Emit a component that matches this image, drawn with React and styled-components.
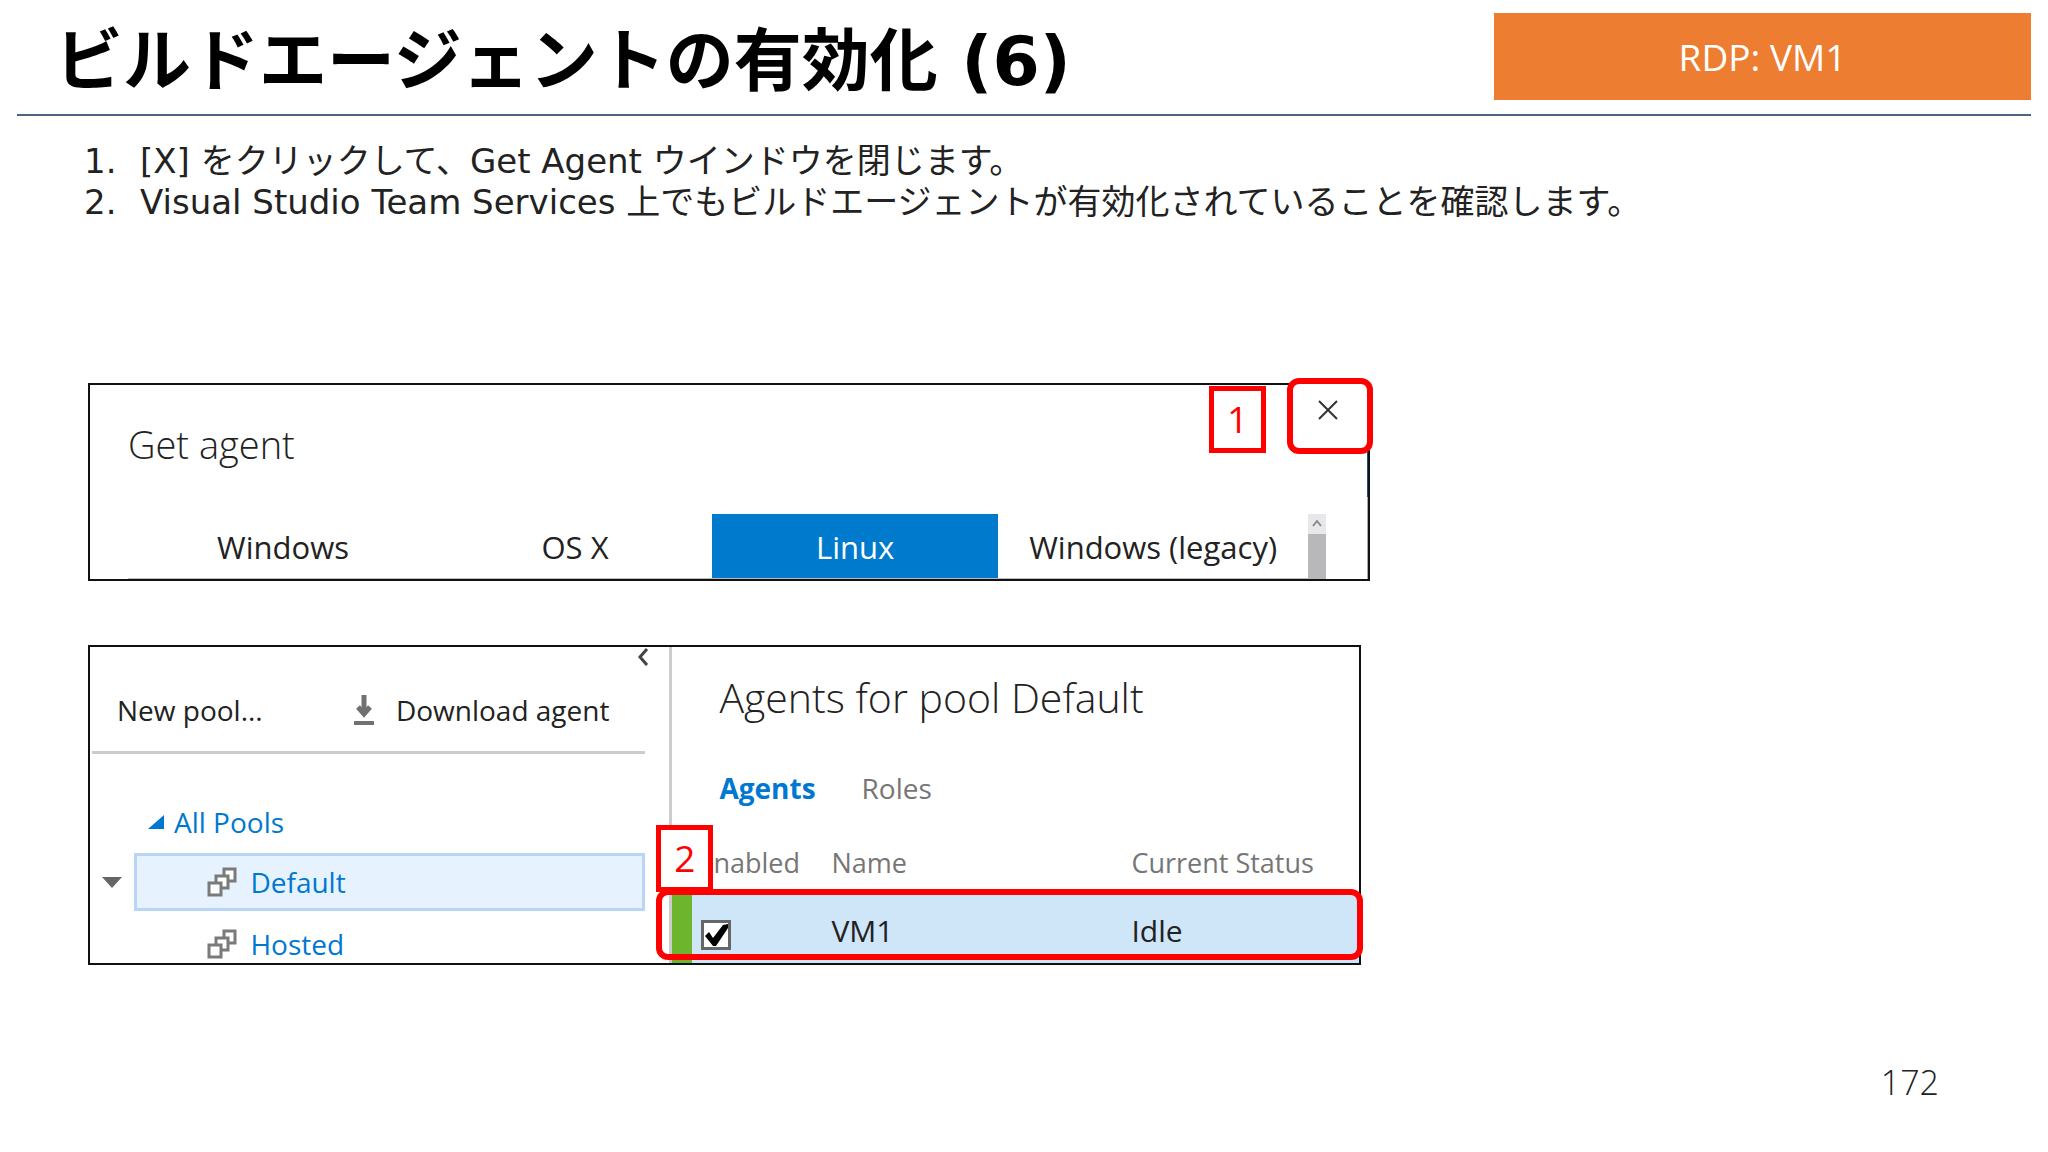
import React, { useState } from 'react';
import styled, { createGlobalStyle } from 'styled-components';

const uiFont = `'Open Sans', 'Noto Sans', 'Noto Sans CJK JP', sans-serif`;
const slideFont = `'DejaVu Sans', 'Noto Sans CJK JP', sans-serif`;

const platforms = ['Windows', 'OS X', 'Linux', 'Windows (legacy)'];
const pools = ['Default', 'Hosted'];
const agents = [{ name: 'VM1', status: 'Idle', enabled: true }];

export default function App() {
  return (
    <Slide>
      <GlobalStyle />
      <Header>
        <Title>ビルドエージェントの有効化 (6)</Title>
        <Machine>RDP: VM1</Machine>
      </Header>
      <Content>
        <Steps>
          <li>[X] をクリックして、Get Agent ウインドウを閉じます。</li>
          <li>Visual Studio Team Services 上でもビルドエージェントが有効化されていることを確認します。</li>
        </Steps>
        <GetAgent />
        <PoolManager />
      </Content>
      <PageNumber>172</PageNumber>
    </Slide>
  );
}

function GetAgent() {
  const [platform, setPlatform] = useState('Linux');

  return (
    <DialogFrame>
      <DialogTitle>Get agent</DialogTitle>
      <PlatformBar>
        {platforms.map((name) => (
          <Platform key={name} $active={name === platform} onClick={() => setPlatform(name)}>
            {name}
          </Platform>
        ))}
        <ScrollTrack>
          <svg width="18" height="20" viewBox="0 0 18 20" fill="none" stroke="#8a8a8a" strokeWidth="2">
            <path d="M5 12l4-5 4 5" />
          </svg>
          <ScrollThumb />
        </ScrollTrack>
      </PlatformBar>
      <StepBadge $top="1px" $right="102px">1</StepBadge>
      <CloseButton aria-label="Close">
        <svg width="20" height="20" viewBox="0 0 20 20" fill="none" stroke="#333" strokeWidth="2">
          <path d="M1 1l18 18M19 1L1 19" />
        </svg>
      </CloseButton>
    </DialogFrame>
  );
}

function PoolManager() {
  return (
    <PoolFrame>
      <Sidebar>
        <Collapse aria-label="Collapse">
          <svg width="12" height="18" viewBox="0 0 12 18" fill="none" stroke="#444" strokeWidth="3">
            <path d="M10 1L3 9l7 8" />
          </svg>
        </Collapse>
        <Toolbar>
          <ToolButton>New pool...</ToolButton>
          <ToolButton>
            <DownloadIcon />
            Download agent
          </ToolButton>
        </Toolbar>
        <AllPools href="#pools">
          <svg width="16" height="14" viewBox="0 0 16 14" fill="#0078d0">
            <path d="M16 0v14H0z" />
          </svg>
          All Pools
        </AllPools>
        {pools.map((name, i) => (
          <PoolRow key={name}>
            {i === 0 && (
              <svg width="20" height="11" viewBox="0 0 20 11" fill="#666">
                <path d="M0 0h20L10 11z" />
              </svg>
            )}
            <PoolLink href={`#${name}`} $selected={i === 0}>
              <PoolIcon />
              {name}
            </PoolLink>
          </PoolRow>
        ))}
      </Sidebar>
      <Details>
        <PoolTitle>Agents for pool Default</PoolTitle>
        <Tabs>
          <Tab href="#agents" $active>Agents</Tab>
          <Tab href="#roles">Roles</Tab>
        </Tabs>
        <AgentTable>
          <thead>
            <tr>
              <th>Enabled</th>
              <th>Name</th>
              <th>Current Status</th>
            </tr>
          </thead>
          <tbody>
            {agents.map((agent) => (
              <tr key={agent.name}>
                <td><EnabledBox label={agent.name} initial={agent.enabled} /></td>
                <td>{agent.name}</td>
                <td>{agent.status}</td>
              </tr>
            ))}
          </tbody>
        </AgentTable>
        <StepBadge $top="178px" $left="-16px">2</StepBadge>
        <RowHighlight />
      </Details>
    </PoolFrame>
  );
}

function EnabledBox({ label, initial }) {
  const [checked, setChecked] = useState(initial);

  return (
    <CheckLabel>
      <input
        type="checkbox"
        aria-label={`${label} enabled`}
        checked={checked}
        onChange={(e) => setChecked(e.target.checked)}
      />
      {checked && (
        <svg width="30" height="30" viewBox="0 0 30 30">
          <path d="M4 16l4-4 4 6L22 5l5-1v4L15 26h-3z" fill="#000" />
        </svg>
      )}
    </CheckLabel>
  );
}

function DownloadIcon() {
  return (
    <svg width="20" height="30" viewBox="0 0 20 30" fill="none" stroke="#707070">
      <path d="M10 0v19" strokeWidth="5" />
      <path d="M4 12l6 7 6-7" strokeWidth="5" />
      <path d="M1 28h18" strokeWidth="4" strokeLinecap="round" />
    </svg>
  );
}

function PoolIcon() {
  return (
    <svg width="30" height="30" viewBox="0 0 30 30" fill="#fff" stroke="#7a7a7a" strokeWidth="3">
      <path d="M17 2h11v12H17z" />
      <path d="M9 9h12v12H9z" />
      <path d="M2 16h12v12H2z" />
    </svg>
  );
}

const GlobalStyle = createGlobalStyle`
  * {
    box-sizing: border-box;
  }
  body {
    margin: 0;
    background-color: #FFF;
  }
  button {
    padding: 0;
    font: inherit;
    color: inherit;
    background: none;
    border: none;
  }
  a {
    text-decoration: none;
  }
  svg {
    display: block;
    flex: none;
  }
`;

const Slide = styled.div`
  min-height: 100vh;
  display: flex;
  flex-direction: column;
  font-family: ${uiFont};
  color: #222;
`;

const Header = styled.header`
  display: flex;
  justify-content: space-between;
  margin: 0 17px;
  padding: 13px 0 14px;
  border-bottom: 2px solid #4A6582;
`;
const Title = styled.h1`
  margin: 0;
  padding-left: 38px;
  font-family: ${slideFont};
  font-size: 68px;
  line-height: 98px;
  height: 87px;
  color: #000;
`;
const Machine = styled.div`
  width: 537px;
  height: 87px;
  font-size: 37px;
  line-height: 88px;
  text-align: center;
  color: #FFF;
  background-color: #ED7D31;
`;

const Content = styled.main`
  padding: 25px 84px 0;
`;
const Steps = styled.ol`
  margin: 0 0 160px;
  padding: 0;
  list-style: none;
  counter-reset: step;
  font-family: ${slideFont};
  font-size: 34px;
  line-height: 41px;

  li {
    display: flex;
    counter-increment: step;
  }
  li::before {
    content: counter(step) '.';
    flex: none;
    width: 56px;
  }
`;

const DialogFrame = styled.section`
  position: relative;
  width: 68.2%;
  height: 198px;
  margin: 0 0 64px 4px;
  border: 2px solid #111;
  background: linear-gradient(#1F4E79 112px, #AAA 112px) right / 1px 100% no-repeat;
`;
const DialogTitle = styled.h2`
  margin: 0;
  padding: 32px 0 0 38px;
  font-size: 38px;
  font-weight: 300;
  line-height: 54px;
  height: 129px;
`;
const PlatformBar = styled.div`
  display: grid;
  grid-template-columns: 310fr 274fr 286fr 310fr 18px;
  height: 65px;
  margin: 0 42px 0 38px;
`;
const Platform = styled.button`
  padding-top: 2px;
  font-size: 31px;
  color: ${(props) => (props.$active ? '#FFF' : '#222')};
  background-color: ${(props) => (props.$active ? '#007ACC' : 'transparent')};
  border-bottom: 1px solid #BBB;
`;
const ScrollTrack = styled.div`
  display: flex;
  flex-direction: column;
  background-color: #E8E8EA;
`;
const ScrollThumb = styled.div`
  flex: 1;
  background-color: #B8B8BA;
`;
const CloseButton = styled.button`
  position: absolute;
  top: -7px;
  right: -5px;
  width: 86px;
  height: 76px;
  padding: 0 4px 12px 0;
  display: flex;
  align-items: center;
  justify-content: center;
  background-color: #FFF;

  &&& {
    border: 6px solid #F00;
    border-radius: 12px;
  }
`;

// Red numbered box that points at the step in the list above
const StepBadge = styled.div`
  position: absolute;
  top: ${(props) => props.$top};
  left: ${(props) => props.$left};
  right: ${(props) => props.$right};
  width: 57px;
  height: 67px;
  border: 5px solid #F00;
  font-size: 37px;
  line-height: 56px;
  text-align: center;
  color: #F00;
  background-color: #FFF;
`;

const PoolFrame = styled.section`
  display: grid;
  grid-template-columns: 580fr 690fr;
  width: 67.7%;
  height: 320px;
  margin-left: 4px;
  border: 2px solid #111;
  font-size: 28px;
  line-height: 38px;
`;
const Sidebar = styled.div`
  display: flex;
  flex-direction: column;
  height: 316px;
  padding: 1px 24px 0 2px;
  overflow: hidden;

  > * {
    flex: none;
  }
`;
const Collapse = styled.button`
  align-self: flex-end;
  height: 18px;
  margin-right: -4px;
`;
const Toolbar = styled.div`
  display: flex;
  align-items: center;
  justify-content: space-between;
  height: 88px;
  margin-bottom: 49px;
  padding: 2px 36px 0 25px;
  border-bottom: 3px solid #CCC;
`;
const ToolButton = styled.button`
  display: flex;
  align-items: center;
  gap: 22px;
`;
const AllPools = styled.a`
  display: flex;
  align-items: center;
  gap: 10px;
  margin-bottom: 10px;
  padding-left: 56px;
  color: #0078D0;
`;
const PoolRow = styled.div`
  display: flex;
  align-items: center;
  justify-content: flex-end;
  gap: 12px;
  height: 62px;
`;
const PoolLink = styled.a`
  display: flex;
  align-items: center;
  gap: 13px;
  width: 511px;
  height: 58px;
  padding-left: 70px;
  color: #0078D0;
  border: 3px solid ${(props) => (props.$selected ? '#B8D4F6' : 'transparent')};
  background-color: ${(props) => (props.$selected ? '#E6F2FE' : 'transparent')};
`;

const Details = styled.div`
  position: relative;
  border-left: 3px solid #CCC;
`;
const PoolTitle = styled.h2`
  margin: 0;
  padding: 20px 0 0 47px;
  font-size: 41px;
  font-weight: 300;
  line-height: 60px;
`;
const Tabs = styled.nav`
  display: flex;
  gap: 46px;
  padding: 42px 0 37px 47px;
`;
const Tab = styled.a`
  font-weight: ${(props) => (props.$active ? 'bold' : 'normal')};
  color: ${(props) => (props.$active ? '#0078D0' : '#767676')};
`;
const AgentTable = styled.table`
  width: 100%;
  border-collapse: collapse;
  table-layout: fixed;

  th, td {
    padding: 0;
    text-align: left;
  }
  th {
    height: 49px;
    font-size: 27px;
    font-weight: normal;
    color: #767676;
    vertical-align: top;
  }
  th:first-child {
    width: 149px;
    padding-left: 16px;
  }
  th:nth-child(2) {
    width: 300px;
  }
  td {
    height: 70px;
    padding-top: 6px;
    font-size: 30px;
    background-color: #CFE6F9;
  }
  td:first-child {
    padding: 14px 0 0 9px;
    border-left: 20px solid #6DB52C;
  }
`;
const CheckLabel = styled.label`
  display: grid;
  width: 30px;
  height: 30px;

  input, svg {
    grid-area: 1 / 1;
  }
  input {
    appearance: none;
    width: 30px;
    height: 30px;
    margin: 0;
    border: 3px solid #666;
    background-color: #FFF;
  }
  svg {
    z-index: 1;
    pointer-events: none;
  }
`;
const RowHighlight = styled.div`
  position: absolute;
  left: -16px;
  right: -4px;
  bottom: 3px;
  height: 71px;
  border: 6px solid #F00;
  border-radius: 12px;
  pointer-events: none;
`;

const PageNumber = styled.footer`
  margin-top: auto;
  padding: 0 109px 44px;
  font-size: 34px;
  font-weight: 300;
  line-height: 52px;
  text-align: right;
`;
